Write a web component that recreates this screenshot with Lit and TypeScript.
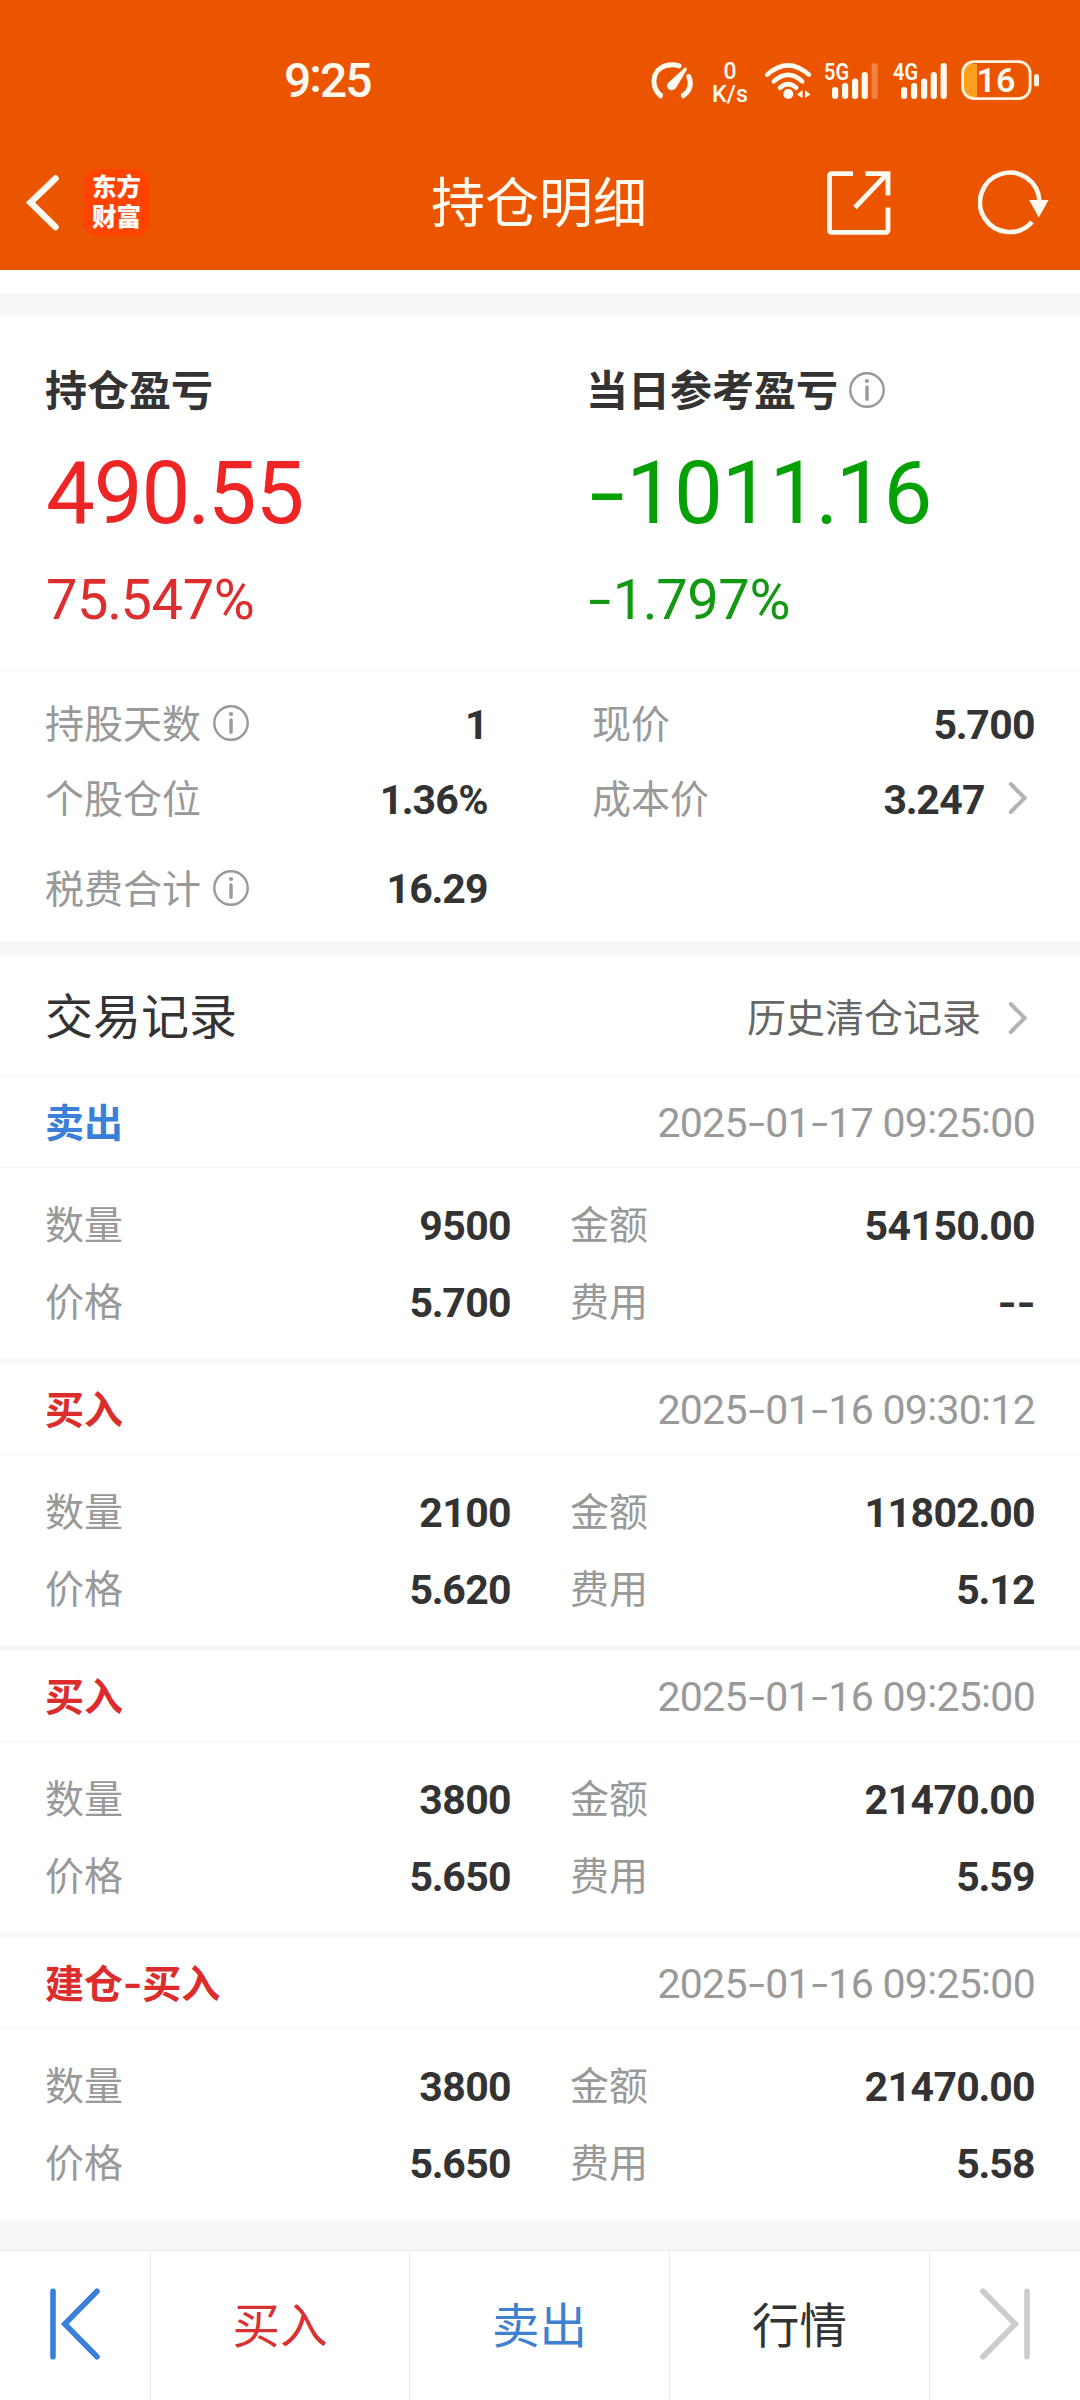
import { LitElement, html, svg, css } from "lit";
import { customElement, property } from "lit/decorators.js";

interface TradeRecord {
  side: string;
  tone: "buy" | "sell";
  time: string;
  quantity: string;
  amount: string;
  price: string;
  fee: string;
}

const RECORDS: TradeRecord[] = [
  { side: "卖出", tone: "sell", time: "2025-01-17 09:25:00", quantity: "9500", amount: "54150.00", price: "5.700", fee: "--" },
  { side: "买入", tone: "buy", time: "2025-01-16 09:30:12", quantity: "2100", amount: "11802.00", price: "5.620", fee: "5.12" },
  { side: "买入", tone: "buy", time: "2025-01-16 09:25:00", quantity: "3800", amount: "21470.00", price: "5.650", fee: "5.59" },
  { side: "建仓-买入", tone: "buy", time: "2025-01-16 09:25:00", quantity: "3800", amount: "21470.00", price: "5.650", fee: "5.58" },
];

/** Wraps punctuation of a figure so that it can be spaced like the digits. */
const figure = (text: string) =>
  [...text].map((ch) =>
    ch === "-" ? html`<span class="dash">-</span>`
    : ch === ":" ? html`<span class="colon">:</span>`
    : ch === "." ? html`<span class="dot">.</span>`
    : ch
  );

const shared = css`
  * { box-sizing: border-box; }
  svg { display: block; flex: none; }
  .dash { display: inline-block; transform: scaleX(1.45); margin: 0 0.095em; }
  .colon { position: relative; top: -0.085em; }
  .dot { margin: 0 -0.018em; }
`;

const infoIcon = html`<svg width="36" height="36" viewBox="0 0 36 36" fill="none">
  <circle cx="18" cy="18" r="16.7" stroke="#999" stroke-width="2.4" />
  <circle cx="18" cy="9" r="2.1" fill="#999" />
  <path d="M18 15V27.2" stroke="#999" stroke-width="3.4" stroke-linecap="round" />
</svg>`;

const chevronIcon = html`<svg width="20" height="34" viewBox="0 0 20 34" fill="none">
  <path d="M2.8 3L16.6 17L2.8 31" stroke="#b3b3b3" stroke-width="4" stroke-linecap="round" />
</svg>`;

@customElement("status-bar")
class StatusBar extends LitElement {
  static styles = [shared, css`
    :host { display: flex; height: 135px; padding: 26px 40px 0 284px; align-items: center; justify-content: space-between; color: #fffaf0; }
    .time { font-size: 48px; font-weight: 500; line-height: 56px; letter-spacing: -2px; }
    .icons { display: flex; align-items: center; height: 44px; }
    .gauge { margin-right: 17px; }
    .speed { margin-right: 15px; }
    .wifi { margin-right: 11px; }
    .sim { margin-right: 13px; }
    .sim2 { margin-right: 13px; }
    svg { overflow: visible; }
    text { font-family: Roboto, sans-serif; }
  `];

  private signal(label: string, cls: string, faded: boolean) {
    const bars = [
      { x: 9, y: 28 }, { x: 19, y: 24 }, { x: 29, y: 19.5 }, { x: 38.7, y: 13 }, { x: 48.6, y: 4 },
    ];
    return html`<svg class=${cls} width="56" height="44" viewBox="0 0 56 44">
      <text x="1" y="21" font-size="24.5" font-weight="600" fill="#fffaf0" textLength="25" lengthAdjust="spacingAndGlyphs">${label}</text>
      ${bars.map((b, i) => svg`<rect x=${b.x} y=${b.y} width="6.2" height=${40 - b.y} rx="3" fill="#fffaf0" opacity=${faded && i === 4 ? 0.28 : 1} />`)}
    </svg>`;
  }

  render() {
    return html`
      <div class="time">${figure("9:25")}</div>
      <div class="icons">
        <svg class="gauge" width="44" height="44" viewBox="0 0 44 44" fill="none">
          <path d="M10.5 36.5C-1.5 26 3 6 22 5.8Q26 5.7 29 6.8" stroke="#fffaf0" stroke-width="5" stroke-linecap="round" />
          <path d="M5.5 34.5L13 34.5L11 40Z" fill="#fffaf0" />
          <path d="M38.8 17.5C42 25 40 32 33.5 36.5" stroke="#fffaf0" stroke-width="5" stroke-linecap="round" />
          <path d="M31 34L37 35.5L33 40Z" fill="#fffaf0" />
          <path d="M35 8.5Q37.6 9 36.4 11.4L26 29Q23 32.5 19.2 30.6Q15.5 28 18 24Z" fill="#fffaf0" />
        </svg>
        <svg class="speed" width="38" height="60" viewBox="0 -8 38 60">
          <text x="19" y="20" font-size="24" font-weight="500" fill="#fffaf0" text-anchor="middle" textLength="13" lengthAdjust="spacingAndGlyphs">0</text>
          <text x="1" y="42.5" font-size="24" font-weight="500" fill="#fffaf0" textLength="36" lengthAdjust="spacingAndGlyphs">K/s</text>
        </svg>
        <svg class="wifi" width="48" height="44" viewBox="0 0 48 44" fill="none">
          <path d="M3.2 15.6Q24 -3 44.8 15.6M9.8 22.4Q24 9.4 38.2 22.4M16 28.8Q24 21.4 32.2 28.8" stroke="#fffaf0" stroke-width="4.6" stroke-linecap="round" />
          <circle cx="24.3" cy="35" r="5" fill="#fffaf0" />
          <path d="M38.6 31V39L33 35.5ZM41 31V39L46.6 35.5Z" fill="#fffaf0" />
        </svg>
        ${this.signal("5G", "sim", true)}
        ${this.signal("4G", "sim2", false)}
        <svg width="79" height="44" viewBox="0 0 79 44" fill="none">
          <path d="M16 5H10Q3 5 3 13V32Q3 40 10 40H16Z" fill="#ff9f1c" />
          <rect x="1.6" y="2.6" width="67.5" height="37" rx="11.5" stroke="#fff3e0" stroke-width="2.8" />
          <rect x="73" y="15" width="5" height="12.5" rx="2.5" fill="#fff3e0" />
          <text x="35" y="33" font-size="34" font-weight="600" fill="#fffaf0" text-anchor="middle">16</text>
        </svg>
      </div>
    `;
  }
}

@customElement("title-bar")
class TitleBar extends LitElement {
  static styles = [shared, css`
    :host { display: grid; grid-template-columns: 1fr auto 1fr; align-items: center; height: 135px; padding: 0 31px 0 25px; color: #fffaf0; }
    .left { display: flex; align-items: center; gap: 22px; }
    .logo { width: 67px; height: 67px; border-radius: 14px; background: #ff4400; color: #fff; font-size: 24.5px; font-weight: 900; line-height: 30px; text-align: center; padding-top: 4px; }
    .title { font-size: 54px; line-height: 64px; padding: 5px 0 0 4px; }
    .right { display: flex; justify-content: flex-end; align-items: center; gap: 87px; }
  `];

  render() {
    return html`
      <div class="left">
        <svg width="36" height="60" viewBox="0 0 36 60" fill="none">
          <path d="M30.5 5.5L5.5 29.5L30.5 54" stroke="#fffaf0" stroke-width="6.5" stroke-linecap="round" />
        </svg>
        <div class="logo">东方<br />财富</div>
      </div>
      <div class="title">持仓明细</div>
      <div class="right">
        <svg width="64" height="64" viewBox="0 0 64 64" fill="none" stroke="#fffaf0" stroke-width="4.8">
          <path d="M26 2.6H5Q2.5 2.6 2.5 5V59Q2.5 61.4 5 61.4H58.5Q61 61.4 61 59V36.5" />
          <path d="M38.5 2.6H61V24.5M60 3L28 36.5" />
        </svg>
        <svg width="71" height="66" viewBox="0 0 71 66" fill="none">
          <path d="M61.4 31A29.7 29.7 0 1 0 54 52" stroke="#fffaf0" stroke-width="4.6" />
          <path d="M51 30H70.6L60.8 47.5Z" fill="#fffaf0" />
        </svg>
      </div>
    `;
  }
}

@customElement("profit-summary")
class ProfitSummary extends LitElement {
  static styles = [shared, css`
    :host { display: grid; grid-template-columns: 541px 1fr; padding: 0 0 0 45px; height: 353px; background: #fff; }
    .cell { display: flex; flex-direction: column; }
    .head { display: flex; align-items: center; gap: 11px; margin-top: 46px; height: 54px; font-size: 42px; font-weight: 700; color: #333; line-height: 54px; }
    .name { padding-top: 4px; }
    .amount { margin-top: 26px; height: 100px; padding-left: 1px; line-height: 100px; font-size: 87px; letter-spacing: -1.2px; }
    .rate { margin-top: 27px; height: 60px; padding-left: 1px; line-height: 60px; font-size: 56px; letter-spacing: -0.4px; }
    .up .amount { color: #ee2525; }
    .up .rate { color: #dc2e2e; }
    .down .amount { color: #04a004; }
    .down .rate { color: #129812; }
  `];

  render() {
    return html`
      <div class="cell up">
        <div class="head"><span class="name">持仓盈亏</span></div>
        <div class="amount">${figure("490.55")}</div>
        <div class="rate">${figure("75.547%")}</div>
      </div>
      <div class="cell down">
        <div class="head"><span class="name">当日参考盈亏</span>${infoIcon}</div>
        <div class="amount">${figure("-1011.16")}</div>
        <div class="rate">${figure("-1.797%")}</div>
      </div>
    `;
  }
}

@customElement("position-details")
class PositionDetails extends LitElement {
  static styles = [shared, css`
    :host { display: grid; grid-template-columns: 443px 443px; column-gap: 104px; grid-template-rows: 75px 75px 104px; padding: 16px 45px 0; height: 271px; font-size: 39px; line-height: 50px; color: #999; border-top: 1px solid #f5f6f7; background: #fff; }
    .item { display: flex; align-items: center; }
    .label { display: flex; align-items: center; gap: 12px; }
    .label svg { margin-bottom: 3px; }
    .name { padding-top: 1px; }
    .value { margin-left: auto; font-size: 41px; font-weight: 700; color: #333; letter-spacing: -0.6px; }
    .more { display: flex; align-items: center; gap: 23px; margin-right: 7px; }
    .more svg { margin-bottom: 4px; }
  `];

  render() {
    return html`
      <div class="item"><span class="label"><span class="name">持股天数</span>${infoIcon}</span><span class="value">1</span></div>
      <div class="item"><span class="label"><span class="name">现价</span></span><span class="value">${figure("5.700")}</span></div>
      <div class="item"><span class="label"><span class="name">个股仓位</span></span><span class="value">${figure("1.36%")}</span></div>
      <div class="item"><span class="label"><span class="name">成本价</span></span><span class="value more"><span>${figure("3.247")}</span>${chevronIcon}</span></div>
      <div class="item"><span class="label"><span class="name">税费合计</span>${infoIcon}</span><span class="value">${figure("16.29")}</span></div>
    `;
  }
}

@customElement("trade-record")
class TradeRecordCard extends LitElement {
  @property({ attribute: false }) record!: TradeRecord;

  static styles = [shared, css`
    :host { display: block; height: 281px; background: #fff; font-size: 39px; line-height: 50px; }
    .head { display: flex; align-items: center; justify-content: space-between; height: 91px; padding: 0 45px; border-bottom: 1px solid #f5f6f7; }
    .side { font-weight: 700; padding-top: 3px; }
    .side .dash { transform: scaleX(1.3); margin: 0 0.05em; }
    .sell { color: #3a80d9; }
    .buy { color: #dc2c2c; }
    .time { padding-top: 1px; font-size: 41px; color: #999; letter-spacing: -0.7px; }
    .body { display: grid; grid-template-columns: 466px 465px; grid-auto-rows: 77px; column-gap: 59px; padding: 19px 45px 0; }
    .field { display: flex; align-items: center; justify-content: space-between; color: #999; }
    .name { padding-top: 1px; }
    .value { font-size: 41px; font-weight: 700; color: #333; letter-spacing: -0.6px; }
    .value .dash { transform: scaleX(1.2); margin: 0 0.04em; }
  `];

  private field(label: string, value: string) {
    return html`<div class="field"><span class="name">${label}</span><span class="value">${figure(value)}</span></div>`;
  }

  render() {
    const r = this.record;
    return html`
      <div class="head"><span class="side ${r.tone}">${figure(r.side)}</span><span class="time">${figure(r.time)}</span></div>
      <div class="body">
        ${this.field("数量", r.quantity)}
        ${this.field("金额", r.amount)}
        ${this.field("价格", r.price)}
        ${this.field("费用", r.fee)}
      </div>
    `;
  }
}

@customElement("bottom-nav")
class BottomNav extends LitElement {
  static styles = [shared, css`
    :host { display: grid; grid-template-columns: 151px 259px 260px 260px 1fr; height: 150px; border-top: 1px solid #ebebeb; background: #fff; font-size: 47.5px; line-height: 60px; }
    .cell { display: flex; align-items: center; justify-content: center; padding-top: 3px; border-right: 1px solid #ebebeb; }
    .cell:last-child { border-right: none; }
    .buy { color: #d93030; }
    .sell { color: #3f80d0; }
    .quote { color: #333; }
    .step { padding: 0 0 3px; }
  `];

  render() {
    return html`
      <div class="cell step">
        <svg width="52" height="72" viewBox="0 0 52 72" fill="none" stroke="#3a80d9" stroke-width="5.6" stroke-linecap="round">
          <path d="M4 3.3V68.7M48 3.3L15.8 36L48 68.7" />
        </svg>
      </div>
      <div class="cell buy">买入</div>
      <div class="cell sell">卖出</div>
      <div class="cell quote">行情</div>
      <div class="cell step">
        <svg width="52" height="72" viewBox="0 0 52 72" fill="none" stroke="#ccc" stroke-width="5.6" stroke-linecap="round">
          <path d="M48 3.3V68.7M4 3.3L36.2 36L4 68.7" />
        </svg>
      </div>
    `;
  }
}

@customElement("app-root")
class AppRoot extends LitElement {
  static styles = [shared, css`
    :host { display: flex; flex-direction: column; width: 1080px; height: 2400px; overflow: hidden; background: #f7f8fa; font-family: Roboto, "Noto Sans CJK SC", sans-serif; }
    .top { height: 270px; background: #eb5500; }
    .strip { height: 23px; margin-bottom: 24px; background: #fff; }
    .section { display: flex; align-items: center; justify-content: space-between; height: 121px; margin-top: 15px; padding: 0 52px 0 45px; background: #fff; border-bottom: 1px solid #f5f6f7; }
    .heading { padding-top: 3px; font-size: 48px; line-height: 60px; color: #333; }
    .history { display: flex; align-items: center; gap: 27px; padding-top: 6px; font-size: 39px; line-height: 50px; color: #666; }
    .history svg { margin-bottom: 3px; }
    .records { display: flex; flex-direction: column; gap: 6px; }
    bottom-nav { margin-top: auto; }
  `];

  render() {
    return html`
      <div class="top">
        <status-bar></status-bar>
        <title-bar></title-bar>
      </div>
      <div class="strip"></div>
      <profit-summary></profit-summary>
      <position-details></position-details>
      <div class="section">
        <span class="heading">交易记录</span>
        <span class="history">历史清仓记录 ${chevronIcon}</span>
      </div>
      <div class="records">
        ${RECORDS.map((r) => html`<trade-record .record=${r}></trade-record>`)}
      </div>
      <bottom-nav></bottom-nav>
    `;
  }
}
